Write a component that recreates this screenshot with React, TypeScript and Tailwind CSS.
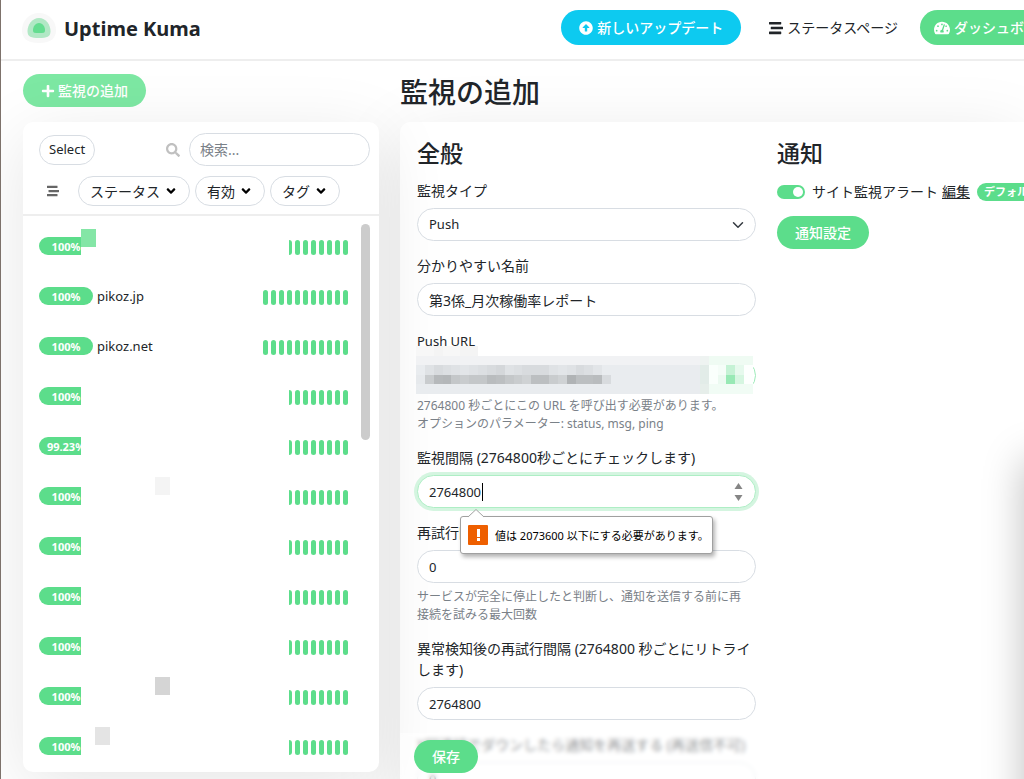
import { useState } from "react";
import type { ReactNode } from "react";
import {
  FaAngleDown,
  FaArrowAltCircleUp,
  FaPlus,
  FaSearch,
  FaStream,
  FaTachometerAlt,
} from "react-icons/fa";

type Monitor = {
  uptime: string;
  name?: string;
  // colour and spot of the blocks left over from redacted names
  block?: string;
};

const monitors: Monitor[] = [
  { uptime: "100%", block: "left-[42px] top-2 bg-[#84e6a6]" },
  { uptime: "100%", name: "pikoz.jp" },
  { uptime: "100%", name: "pikoz.net" },
  { uptime: "100%" },
  { uptime: "99.23%" },
  { uptime: "100%", block: "left-[116px] top-1.5 bg-[#f4f4f4]" },
  { uptime: "100%" },
  { uptime: "100%" },
  { uptime: "100%" },
  { uptime: "100%", block: "left-[116px] top-1.5 bg-[#d5d5d5]" },
  { uptime: "100%", block: "left-14 top-1.5 bg-[#e4e4e4]" },
];

// pixelated push URL, one row of cell colours per line
const mosaic = [
  ["#f7f7f7", "#f7f7f7", "#f4f4f4", "#f7f7f7", "#f7f7f7", "#f4f4f4", "#f4f4f4"],
  Array.from({ length: 38 }, (_, i) =>
    i < 32 ? "#f1f2f4" : i === 32 ? "#eef3f1" : "#effbf3"
  ),
  "e9ecef dfe2e5 d8dbde dcdfe2 dfe2e5 e2e5e8 dfe2e5 dcdfe2 d8dbde d4d7da dfe2e5 dcdfe2 d8dbde d8dbde d8dbde dfe2e5 e2e5e8 dfe2e5 d8dbde dcdfe2 e2e5e8 e9ecef e9ecef e9ecef e9ecef e9ecef e9ecef e9ecef e9ecef e9ecef e9ecef e9ecef e2ece8 fafffc f5fdf8 c5f2d5 e6f9ed fdfffe"
    .split(" ")
    .map((c) => "#" + c),
  "e6e9ec c9ccce b6b9bb b4b7b9 c4c7c9 c9ccce c4c7c9 c4c7c9 b9bcbe bcbfc1 c4c7c9 c9ccce cfd2d4 bcbfc1 bcbfc1 c9ccce cfd2d4 b0b3b5 bcbfc1 bcbfc1 b9bcbe d8dbde e9ecef e9ecef e9ecef e9ecef e9ecef e9ecef e9ecef e9ecef e9ecef e9ecef e2ece8 fafffc ecfaf1 98e9b5 d6f6e1 fdfffe"
    .split(" ")
    .map((c) => "#" + c),
  Array.from({ length: 38 }, (_, i) =>
    i < 32 ? "#e9ecef" : i === 32 ? "#e6eeea" : "#f1fcf5"
  ),
];

function Logo() {
  return (
    <svg width="34" height="32" viewBox="0 0 34 32" aria-hidden="true">
      <path
        d="M17 0C27 0 34 8 34 17C34 26 28 30 17 30C6 30 0 26 0 17C0 8 7 0 17 0Z"
        fill="#f8f8f8"
      />
      <path
        d="M17 5C24 5 28.500 12 28.500 18C28.500 24 25 25 17 25C9 25 5.500 24 5.500 18C5.500 12 10 5 17 5Z"
        fill="#b1e8c5"
      />
      <path
        d="M17 10C21 10 23 14 23 17C23 20 22 20 17 20C12 20 11 20 11 17C11 14 13 10 17 10Z"
        fill="#64dd90"
      />
    </svg>
  );
}

function Header() {
  return (
    <header className="flex shrink-0 items-start justify-between border-b-2 border-[#eeeeee] pl-[21px] pt-[10px] pb-[14px]">
      <a href="#home" className="flex shrink-0 items-center gap-2 pt-[3px]">
        <Logo />
        <span className="text-xl font-bold">Uptime Kuma</span>
      </a>
      <nav className="-mr-[42px] flex items-center whitespace-nowrap">
        <a
          href="#update"
          className="mr-[14px] flex h-[35px] items-center gap-1 rounded-full bg-[#0dcaf0] px-[18px] font-medium text-white"
        >
          <FaArrowAltCircleUp size={14} />
          新しいアップデート
        </a>
        <a href="#status" className="flex h-[35px] items-center gap-1 px-[14px]">
          <FaStream size={14} />
          ステータスページ
        </a>
        <a
          href="#dashboard"
          className="ml-2 flex h-[35px] items-center gap-1 rounded-full bg-[#5cdd8b] px-[14px] font-medium text-white"
        >
          <FaTachometerAlt size={16} />
          ダッシュボード
        </a>
      </nav>
    </header>
  );
}

function FilterButton({ children }: { children: ReactNode }) {
  return (
    <button className="flex h-[30px] items-center gap-1 rounded-full border border-[#d8dde3] px-[11px]">
      {children}
      <FaAngleDown size={14} className="text-black" />
    </button>
  );
}

function MonitorRow({ monitor }: { monitor: Monitor }) {
  const { uptime, name, block } = monitor;
  return (
    <li className="relative flex h-[50px] items-center justify-between">
      <div className="flex items-center gap-1">
        <div className={name ? "w-[54px]" : "w-[42px] overflow-hidden"}>
          <span className="flex h-[18px] w-[54px] items-center justify-center rounded-full bg-[#5cdd8b] text-[11px] font-bold text-white">
            {uptime}
          </span>
        </div>
        {name && <span className="text-[13px]">{name}</span>}
      </div>
      <div className="flex gap-[3px] pt-0.5">
        {Array.from({ length: name ? 11 : 8 }, (_, i) => (
          <span
            key={i}
            className={
              !name && i === 0
                ? "h-[15px] w-[3px] rounded-r-full bg-[#5cdd8b]"
                : "h-[15px] w-[5px] rounded-full bg-[#5cdd8b]"
            }
          />
        ))}
      </div>
      {block && <span className={"absolute h-[18px] w-[15px] " + block} />}
    </li>
  );
}

function MonitorList() {
  return (
    <section className="relative rounded-[10px] bg-white shadow-[0_15px_70px_rgba(0,0,0,0.1)]">
      <div className="border-b-2 border-[#eeeeee] pt-[11px] pr-[9px] pb-2 pl-4">
        <div className="flex items-center justify-between">
          <button className="h-[30px] rounded-full border border-[#d8dde3] px-[9px] text-[13px]">
            Select
          </button>
          <label className="flex items-center gap-[9px] text-[#c0c0c0]">
            <FaSearch size={14} />
            <input
              type="text"
              aria-label="検索"
              placeholder="検索..."
              className="h-[33px] w-[181px] rounded-full border border-[#d8dde3] px-2.5 text-[#212529] placeholder:text-[#7a8188]"
            />
          </label>
        </div>
        <div className="mt-[10px] flex items-center gap-[5px]">
          <button aria-label="並べ替え" className="mr-1.5 px-2 text-[#666666]">
            <FaStream size={12} />
          </button>
          <FilterButton>ステータス</FilterButton>
          <FilterButton>有効</FilterButton>
          <FilterButton>タグ</FilterButton>
        </div>
      </div>
      <ul className="pt-[5px] pr-[31px] pb-px pl-4">
        {monitors.map((monitor, i) => (
          <MonitorRow key={i} monitor={monitor} />
        ))}
      </ul>
      <div className="absolute top-[102px] right-[9px] h-[216px] w-[9px] rounded-full bg-[#cccccc]" />
    </section>
  );
}

const inputClass =
  "block h-[33px] w-full rounded-full border border-[#d8dde3] bg-white px-[11px]";

function Field({
  id,
  label,
  help,
  children,
}: {
  id: string;
  label: ReactNode;
  help?: ReactNode;
  children: ReactNode;
}) {
  return (
    <div className="mb-[14px]">
      <label htmlFor={id} className="mb-[7px] block">
        {label}
      </label>
      <div className="relative">{children}</div>
      {help && (
        <p className="mt-[5px] pr-2 text-xs leading-[18px] text-[#7a8188]">{help}</p>
      )}
    </div>
  );
}

function PushUrl() {
  return (
    <>
      <input
        id="push-url"
        type="text"
        readOnly
        className="block h-[33px] w-full rounded-full border border-[#9debb9] bg-white px-[11px]"
      />
      <svg
        className="absolute -top-[13px] -left-px h-[48px] w-[337px]"
        viewBox="0 0 38 5"
        preserveAspectRatio="none"
        shapeRendering="crispEdges"
        aria-hidden="true"
      >
        {mosaic.map((row, y) =>
          row.map((color, x) => (
            <rect key={x + "-" + y} x={x} y={y} width="1" height="1" fill={color} />
          ))
        )}
      </svg>
    </>
  );
}

function ValidationBubble() {
  return (
    <div
      role="alert"
      className="absolute top-[41px] left-[43px] z-10 flex h-[38px] items-center gap-[7px] rounded-[3px] border border-[#a0a0a0] bg-white pr-[3px] pl-[7px] text-[11px] whitespace-nowrap text-black shadow-[2px_3px_4px_rgba(0,0,0,0.3)]"
    >
      <svg
        className="absolute -top-2 left-[7px]"
        width="16"
        height="9"
        viewBox="0 0 16 9"
        aria-hidden="true"
      >
        <path d="M0 8L8 0.500L16 8V9H0Z" fill="#fff" />
        <path d="M0 8L8 0.500L16 8" fill="none" stroke="#a0a0a0" />
      </svg>
      <svg width="20" height="20" viewBox="0 0 20 20" aria-hidden="true">
        <rect width="20" height="20" rx="1" fill="#ee5f00" />
        <rect x="9" y="4" width="3" height="8" fill="#fff" />
        <rect x="9" y="13" width="3" height="3" fill="#fff" />
      </svg>
      値は 2073600 以下にする必要があります。
    </div>
  );
}

function GeneralSettings() {
  const [name, setName] = useState("第3係_月次稼働率レポート");
  const [interval, setInterval] = useState("2764800");
  const [retries, setRetries] = useState("0");
  const [retryInterval, setRetryInterval] = useState("2764800");

  return (
    <div>
      <h2 className="mb-[13px] text-[23px] leading-7 font-medium">全般</h2>
      <Field id="type" label="監視タイプ">
        <select id="type" className={inputClass + " appearance-none text-[13px]"}>
          <option>Push</option>
        </select>
        <svg
          className="pointer-events-none absolute top-[11px] right-[12px]"
          width="12"
          height="12"
          viewBox="0 0 16 16"
          aria-hidden="true"
        >
          <path
            d="M2 5l6 6 6-6"
            fill="none"
            stroke="#343a40"
            strokeWidth="2"
            strokeLinecap="round"
            strokeLinejoin="round"
          />
        </svg>
      </Field>
      <Field id="name" label="分かりやすい名前">
        <input
          id="name"
          type="text"
          value={name}
          onChange={(e) => setName(e.target.value)}
          className={inputClass}
        />
      </Field>
      <Field
        id="push-url"
        label={<span className="text-[13px]">Push URL</span>}
        help={
          <>
            2764800 秒ごとにこの URL を呼び出す必要があります。
            <br />
            オプションのパラメーター: status, msg, ping
          </>
        }
      >
        <PushUrl />
      </Field>
      <Field id="interval" label="監視間隔 (2764800秒ごとにチェックします)">
        <input
          id="interval"
          type="text"
          inputMode="numeric"
          value={interval}
          onChange={(e) => setInterval(e.target.value)}
          className="block h-[33px] w-full rounded-full border border-[#aeeec5] bg-white px-[11px] text-[13px] shadow-[0_0_0_3px_#d4f5e0] outline-none"
        />
        <span className="absolute top-2 left-[65px] h-[18px] w-px bg-black" />
        <svg
          className="absolute top-2 right-[13px]"
          width="9"
          height="18"
          viewBox="0 0 9 18"
          fill="#858585"
          aria-hidden="true"
        >
          <path d="M0.500 6L4.500 0L8.500 6Z" />
          <path d="M0.500 12L4.500 18L8.500 12Z" />
        </svg>
        <ValidationBubble />
      </Field>
      <Field
        id="retries"
        label="再試行回数"
        help="サービスが完全に停止したと判断し、通知を送信する前に再接続を試みる最大回数"
      >
        <input
          id="retries"
          type="text"
          inputMode="numeric"
          value={retries}
          onChange={(e) => setRetries(e.target.value)}
          className={inputClass + " text-[13px]"}
        />
      </Field>
      <Field
        id="retry-interval"
        label="異常検知後の再試行間隔 (2764800 秒ごとにリトライします)"
      >
        <input
          id="retry-interval"
          type="text"
          inputMode="numeric"
          value={retryInterval}
          onChange={(e) => setRetryInterval(e.target.value)}
          className={inputClass + " text-[13px]"}
        />
      </Field>
      <Field id="resend" label="X回連続でダウンしたら通知を再送する (再送信不可)">
        <input
          id="resend"
          type="text"
          inputMode="numeric"
          defaultValue="0"
          className={inputClass + " text-[13px]"}
        />
      </Field>
    </div>
  );
}

function Notifications() {
  const [enabled, setEnabled] = useState(true);

  return (
    <div className="whitespace-nowrap">
      <h2 className="mb-[14px] text-[23px] leading-7 font-medium">通知</h2>
      <div className="flex items-center">
        <input
          id="alert"
          type="checkbox"
          role="switch"
          checked={enabled}
          onChange={(e) => setEnabled(e.target.checked)}
          className="relative h-[14px] w-7 shrink-0 appearance-none rounded-full bg-[#cccccc] before:absolute before:top-0.5 before:left-0.5 before:size-2.5 before:rounded-full before:bg-white checked:bg-[#5cdd8b] checked:before:left-4"
        />
        <label htmlFor="alert" className="ml-[7px]">
          サイト監視アラート
        </label>
        <a href="#edit" className="ml-1 underline">
          編集
        </a>
        <span className="ml-[7px] flex h-[18px] items-center rounded-full bg-[#5cdd8b] px-[7px] text-[11px] font-bold text-white">
          デフォルト
        </span>
      </div>
      <button className="mt-[14px] h-[33px] rounded-full bg-[#5cdd8b] px-[18px] font-medium text-white">
        通知設定
      </button>
    </div>
  );
}

function App() {
  return (
    <div className="relative flex h-screen flex-col overflow-hidden border-l border-[#7d726b] bg-white font-['Noto_Sans','Noto_Sans_CJK_JP',sans-serif] text-sm leading-[21px] text-[#212529]">
      <Header />
      <div className="flex min-h-0 flex-1 gap-[21px] pl-[22px]">
        <aside className="w-[356px] shrink-0 pt-[13px]">
          <button className="mb-[15px] flex h-[33px] items-center gap-[3px] rounded-full bg-[#7de8a3] px-[18px] font-medium text-white">
            <FaPlus size={14} />
            監視の追加
          </button>
          <MonitorList />
        </aside>
        <main className="min-w-0 flex-1 pt-[14px]">
          <h1 className="mb-[13px] text-[28px] leading-[34px] font-medium">
            監視の追加
          </h1>
          <form className="grid grid-cols-[339px_minmax(0,1fr)] gap-[21px] rounded-tl-[10px] bg-white pt-[17px] pl-[17px] shadow-[0_15px_70px_rgba(0,0,0,0.1)]">
            <GeneralSettings />
            <Notifications />
            <div className="fixed right-0 bottom-0 left-[400px] bg-white/50 px-[14px] pt-[7px] pb-1.5 backdrop-blur-[2px]">
              <button className="h-[33px] rounded-full bg-[#5cdd8b] px-[18px] font-medium text-white">
                保存
              </button>
            </div>
          </form>
        </main>
      </div>
      {/* shadow cast by a window just past the right edge */}
      <div className="absolute top-[440px] left-full h-[600px] w-20 shadow-[0_20px_40px_rgba(0,0,0,0.25)]" />
    </div>
  );
}

export default App;
